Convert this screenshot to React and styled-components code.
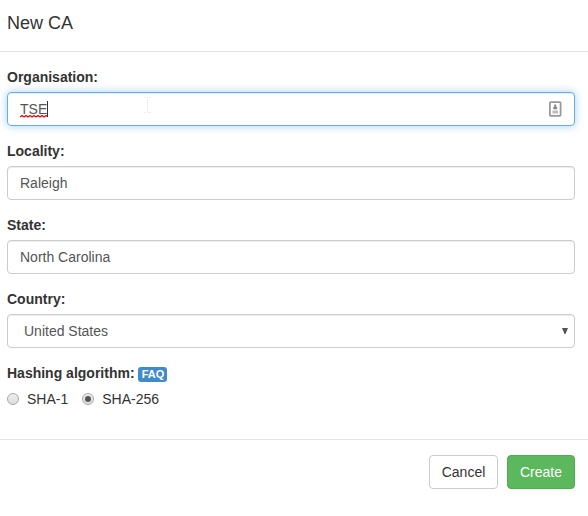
import React from "react";
import styled, { createGlobalStyle, css } from "styled-components";

const GlobalStyle = createGlobalStyle`
  * { box-sizing: border-box; }
  body {
    margin: 0;
    background: #fff;
    color: #333;
    font: 14px/20px "Liberation Sans", Arial, sans-serif;
    overflow: hidden;
  }
`;

const Dialog = styled.main`
  display: flex;
  flex-direction: column;
  height: 516px;
`;

const Header = styled.header`
  height: 52px;
  padding: 11px 7px 0;
  border-bottom: 1px solid #e5e5e5;
`;

const Title = styled.h4`
  margin: 0;
  font-size: 18px;
  font-weight: 400;
  line-height: 25px;
`;

const Body = styled.section`
  height: 387px;
  padding: 15px 13px 0 7px;
`;

const Field = styled.div`
  height: 74px;
`;

const Label = styled.label`
  display: block;
  height: 25px;
  font-weight: 700;
`;

const Control = styled.div`
  display: flex;
  align-items: center;
  justify-content: space-between;
  height: 34px;
  padding: 0 ${(p) => (p.$select ? "5px 0 16px" : "12px")};
  color: #555;
  border: 1px solid #ccc;
  border-radius: 4px;
  box-shadow: inset 0 1px 1px rgba(0, 0, 0, 0.075);
  ${(p) =>
    p.$focused &&
    css`
      border-color: #66afe9;
      box-shadow: inset 0 1px 1px rgba(0, 0, 0, 0.075),
        0 0 8px rgba(102, 175, 233, 0.6);
    `}
`;

const Typed = styled.span`
  position: relative;
  display: inline-block;
`;

const Squiggle = styled.svg`
  position: absolute;
  left: 0;
  top: 15px;
`;

const Caret = styled.i`
  position: absolute;
  left: 27px;
  top: 2px;
  width: 1px;
  height: 16px;
  background: #333;
`;

const Pointer = styled.svg`
  position: absolute;
  left: 123px;
  top: -2px;
`;

const Faq = styled.span`
  display: inline-block;
  height: 15px;
  width: 29px;
  text-align: center;
  border-radius: 3px;
  background: #428bca;
  color: #fff;
  font-size: 11px;
  line-height: 15px;
`;

const Radios = styled.div`
  display: flex;
  align-items: center;
  height: 22px;
`;

const Option = styled.label`
  display: flex;
  align-items: center;
  gap: 8px;
  margin-right: 14px;
`;

const Dot = styled.span`
  display: grid;
  place-items: center;
  width: 12px;
  height: 12px;
  border: 1px solid #a8a8a8;
  border-radius: 50%;
  background: linear-gradient(#eee, #ddd);
  &::after {
    content: "";
    width: 6px;
    height: 6px;
    border-radius: 50%;
    background: ${(p) => (p.$on ? "#555" : "transparent")};
  }
`;

const Footer = styled.footer`
  display: flex;
  justify-content: flex-end;
  gap: 9px;
  padding: 15px 13px 0;
  border-top: 1px solid #e5e5e5;
`;

const Button = styled.button`
  width: ${(p) => (p.$primary ? 68 : 69)}px;
  height: 34px;
  padding: 0;
  border: 1px solid ${(p) => (p.$primary ? "#4cae4c" : "#ccc")};
  border-radius: 4px;
  background: ${(p) => (p.$primary ? "#5cb85c" : "#fff")};
  color: ${(p) => (p.$primary ? "#fff" : "#333")};
  font: inherit;
`;

export default function App() {
  return (
    <Dialog>
      <GlobalStyle />
      <Header><Title>New CA</Title></Header>
      <Body>
        <Field>
          <Label>Organisation:</Label>
          <Control $focused>
            <Typed>
              TSE
              <Squiggle width="27" height="4" viewBox="0 0 27 4">
                <path d="M0 3 2 1.500l2 1.500L6 1.500l2 1.500L10 1.500l2 1.500L14 1.500l2 1.500L18 1.500l2 1.500L22 1.500l2 1.500L26 1.500l2 1.500" fill="none" stroke="#f00000" strokeWidth="1.300" />
              </Squiggle>
              <Caret />
              <Pointer width="9" height="16" viewBox="0 0 9 16">
                <path d="M1 .5h2.500l1 1 1-1H8M4.500 1.500v13M1 15.500h2.500l1-1 1 1H8" fill="none" stroke="#eee" />
              </Pointer>
            </Typed>
            <svg width="14" height="16" viewBox="0 0 14 16">
              <rect x="1.900" y="1.200" width="10.700" height="13.600" rx="0.800" fill="#fff" stroke="#999" strokeWidth="1.800" />
              <path d="M6.200 3.500h2v2.500h1v2.300H5.200V6h1z" fill="#888" />
              <path d="M4.500 9.500h5.500v3H4.500z" fill="#bbb" />
            </svg>
          </Control>
        </Field>
        <Field>
          <Label>Locality:</Label>
          <Control>Raleigh</Control>
        </Field>
        <Field>
          <Label>State:</Label>
          <Control>North Carolina</Control>
        </Field>
        <Field>
          <Label>Country:</Label>
          <Control $select>
            United States
            <svg width="8" height="8" viewBox="0 0 8 8"><path d="M1 1h6L4.500 7h-1z" fill="#555" /></svg>
          </Control>
        </Field>
        <Label>Hashing algorithm: <Faq>FAQ</Faq></Label>
        <Radios>
          <Option><Dot />SHA-1</Option>
          <Option><Dot $on />SHA-256</Option>
        </Radios>
      </Body>
      <Footer>
        <Button>Cancel</Button>
        <Button $primary>Create</Button>
      </Footer>
    </Dialog>
  );
}
